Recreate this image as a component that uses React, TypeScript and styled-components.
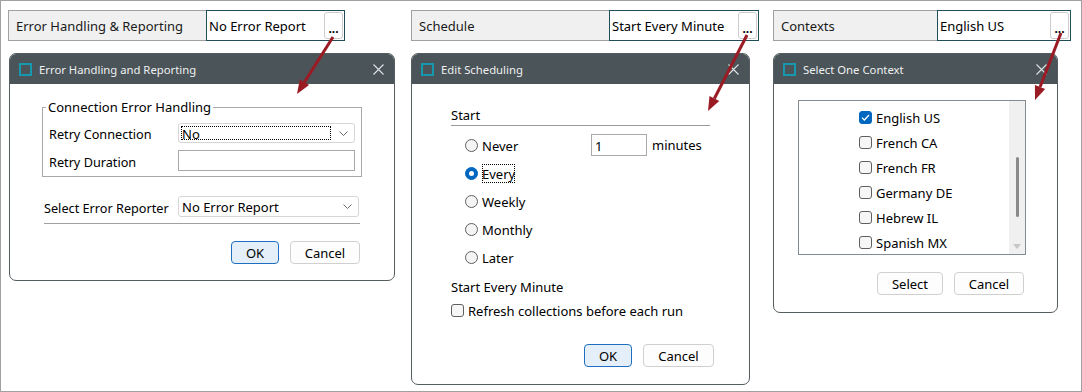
import styled, { createGlobalStyle } from "styled-components";

const GlobalStyle = createGlobalStyle`
	html, body {
		margin: 0;
		padding: 0;
		background: #ffffff;
	}
	body {
		font-family: "Noto Sans", "Open Sans", sans-serif;
		font-size: 12.7px;
		color: #000000;
	}
	* {
		box-sizing: border-box;
	}
`;

const Frame = styled.div`
	position: relative;
	display: flex;
	align-items: flex-start;
	width: 1082px;
	height: 392px;
	padding: 9px 0 0 7px;
	border: 1px solid #a0a0a0;
`;

const Column = styled.div<{ $width: number; $after: number }>`
	display: flex;
	flex-direction: column;
	gap: 12px;
	width: ${(p) => p.$width}px;
	margin-right: ${(p) => p.$after}px;
`;

const PropRow = styled.div<{ $width: number }>`
	display: flex;
	width: ${(p) => p.$width}px;
	height: 31px;
`;

const PropLabel = styled.div<{ $width: number }>`
	display: flex;
	align-items: center;
	width: ${(p) => p.$width}px;
	padding: 1px 0 0 7px;
	background: #f0f0f0;
	border: 1px solid #a0a0a0;
	border-right: none;
	color: #1a1a1a;
	font-size: 13px;
`;

const PropValue = styled.div`
	display: flex;
	flex: 1;
	padding: 1px;
	background: #ffffff;
	border: 1px solid #1f4e59;
`;

const PropText = styled.span`
	display: flex;
	align-items: center;
	flex: 1;
	padding: 1px 0 0 1px;
	font-size: 13px;
`;

const EllipsisButton = styled.div`
	display: flex;
	align-items: flex-end;
	justify-content: center;
	width: 19px;
	padding-bottom: 3px;
	background: #ffffff;
	border: 1px solid #cdcdcd;
	border-radius: 3px;
	font-size: 12px;
	font-weight: bold;
	line-height: 12px;
`;

const Dialog = styled.div<{ $width: number; $height: number; $shift: number }>`
	display: flex;
	flex-direction: column;
	width: ${(p) => p.$width}px;
	height: ${(p) => p.$height}px;
	margin-left: ${(p) => p.$shift}px;
	background: #ffffff;
	border: 1px solid #555d61;
	border-radius: 7px;
	overflow: hidden;
`;

const TitleBar = styled.div`
	display: flex;
	align-items: center;
	flex-shrink: 0;
	height: 30px;
	padding: 0 10px 0 9px;
	background: #4b5458;
	color: #eef0f1;
	font-size: 11.3px;
`;

const TitleIcon = styled.span`
	width: 13px;
	height: 13px;
	border: 2px solid #1799ad;
`;

const TitleText = styled.span`
	flex: 1;
	margin-left: 7px;
`;

const DialogBody = styled.div<{ $pad: string }>`
	display: flex;
	flex-direction: column;
	flex: 1;
	padding: ${(p) => p.$pad};
`;

const GroupBox = styled.fieldset`
	margin: 0;
	padding: 0 6px 5px 6px;
	border: 1px solid #a9a9a9;
`;

const Legend = styled.legend`
	margin-left: -3px;
	padding: 0 2px;
	line-height: 18px;
	font-size: 13px;
`;

const FormRow = styled.div<{ $height: number; $top: number; $inset?: string }>`
	display: flex;
	align-items: center;
	height: ${(p) => p.$height}px;
	margin: ${(p) => p.$top}px ${(p) => p.$inset ?? "0 0 0"};
`;

const FieldLabel = styled.span<{ $width: number }>`
	width: ${(p) => p.$width}px;
	padding-top: 2px;
`;

const ComboBox = styled.div`
	display: flex;
	align-items: center;
	flex: 1;
	align-self: stretch;
	padding: 2px 6px 2px 2px;
	background: #ffffff;
	border: 1px solid #d6d6d6;
	border-radius: 3px;
	font-size: 13px;
`;

const ComboText = styled.span<{ $focused?: boolean }>`
	display: flex;
	align-items: center;
	flex: 1;
	align-self: stretch;
	margin-right: 8px;
	padding-top: 1px;
	border: 1px dotted ${(p) => (p.$focused ? "#000000" : "transparent")};
`;

const TextBox = styled.div`
	flex: 1;
	align-self: stretch;
	background: #ffffff;
	border: 1px solid #a9a9a9;
`;

const Separator = styled.div`
	height: 1px;
	margin: 6px 2px 0 2px;
	background: #a0a0a0;
`;

const ButtonRow = styled.div<{ $top: number }>`
	display: flex;
	justify-content: flex-end;
	gap: 11px;
	margin-top: ${(p) => p.$top}px;
	padding-right: 2px;
`;

const DialogButton = styled.button<{ $width: number; $primary?: boolean }>`
	width: ${(p) => p.$width}px;
	height: 23px;
	padding: 1px 0 0 0;
	background: ${(p) => (p.$primary ? "#e4eff9" : "#fdfdfd")};
	border: 1px solid ${(p) => (p.$primary ? "#1f6fc0" : "#d0d0d0")};
	border-radius: 4px;
	font-family: inherit;
	font-size: 13px;
	color: #000000;
`;

const SectionHeading = styled.div`
	width: 259px;
	margin-top: 21px;
	padding-top: 1px;
	line-height: 19px;
	border-bottom: 1px solid #9a9a9a;
	font-size: 13px;
`;

const RadioList = styled.div`
	display: flex;
	flex-direction: column;
	margin-top: 5px;
	padding-left: 14px;
`;

const RadioRow = styled.div`
	display: flex;
	align-items: center;
	height: 28px;
`;

const Radio = styled.span<{ $checked?: boolean }>`
	display: flex;
	align-items: center;
	justify-content: center;
	width: 13px;
	height: 13px;
	border-radius: 50%;
	background: ${(p) => (p.$checked ? "#0067c0" : "#f4f4f4")};
	border: 1px solid ${(p) => (p.$checked ? "#0067c0" : "#5f5f5f")};
	&::after {
		content: "";
		width: 5px;
		height: 5px;
		border-radius: 50%;
		background: ${(p) => (p.$checked ? "#ffffff" : "transparent")};
	}
`;

const OptionLabel = styled.span<{ $width?: number; $focused?: boolean }>`
	width: ${(p) => (p.$width ? `${p.$width}px` : "auto")};
	margin-left: 4px;
	padding-top: 2px;
	line-height: 17px;
	font-size: 13px;
	${(p) => (p.$focused ? "outline: 1px dotted #000000; outline-offset: -1px;" : "")}
`;

const NumberBox = styled.div`
	display: flex;
	align-items: center;
	width: 56px;
	height: 22px;
	padding: 1px 0 0 3px;
	border: 1px solid #a9a9a9;
	font-size: 13px;
`;

const Units = styled.span`
	margin-left: 5px;
	font-size: 13px;
`;

const Caption = styled.div`
	margin-top: 5px;
	padding-top: 2px;
	line-height: 18px;
	font-size: 13px;
`;

const CheckRow = styled.div<{ $height: number; $top?: number }>`
	display: flex;
	align-items: center;
	height: ${(p) => p.$height}px;
	margin-top: ${(p) => p.$top ?? 0}px;
`;

const CheckBox = styled.span<{ $checked?: boolean }>`
	display: flex;
	align-items: center;
	justify-content: center;
	width: 13px;
	height: 13px;
	border-radius: 3px;
	background: ${(p) => (p.$checked ? "#0067c0" : "#f6f6f6")};
	border: 1px solid ${(p) => (p.$checked ? "#0067c0" : "#5f5f5f")};
`;

const ListBox = styled.div`
	display: flex;
	width: 228px;
	height: 155px;
	margin-top: 16px;
	border: 1px solid #858b92;
`;

const ListItems = styled.div`
	flex: 1;
	padding: 4px 0 0 60px;
	overflow: hidden;
`;

const ScrollTrack = styled.div`
	display: flex;
	flex-direction: column;
	align-items: center;
	width: 16px;
	background: #f0f0f0;
`;

const ScrollThumb = styled.div`
	width: 3px;
	height: 60px;
	margin-top: 56px;
	border-radius: 2px;
	background: #8a8a8a;
`;

const ScrollArrow = styled.div`
	margin-top: auto;
	margin-bottom: 5px;
	border-left: 4px solid transparent;
	border-right: 4px solid transparent;
	border-top: 5px solid #c6c6c6;
`;

const ArrowLayer = styled.svg`
	position: absolute;
	left: -1px;
	top: -1px;
	pointer-events: none;
`;

function CloseIcon() {
	return (
		<svg width="11" height="11" viewBox="0 0 11 11">
			<path d="M0.5 0.5 L10.5 10.5 M10.5 0.5 L0.5 10.5" stroke="#dfe2e3" strokeWidth="1.1" />
		</svg>
	);
}

function Chevron() {
	return (
		<svg width="9" height="5" viewBox="0 0 9 5">
			<path d="M0.5 0.5 L4.5 4.5 L8.5 0.5" fill="none" stroke="#6a6a6a" strokeWidth="1" />
		</svg>
	);
}

function Tick() {
	return (
		<svg width="9" height="7" viewBox="0 0 9 7">
			<path d="M1 3.6 L3.4 6 L8 1" fill="none" stroke="#ffffff" strokeWidth="1.3" />
		</svg>
	);
}

interface IArrow {
	x1: number;
	y1: number;
	x2: number;
	y2: number;
}

function Pointer({ x1, y1, x2, y2 }: IArrow) {
	const len = Math.hypot(x2 - x1, y2 - y1);
	const ux = (x2 - x1) / len;
	const uy = (y2 - y1) / len;
	const bx = x2 - ux * 14;
	const by = y2 - uy * 14;
	const w = 5.5;
	const head = `${x2},${y2} ${bx - uy * w},${by + ux * w} ${bx + uy * w},${by - ux * w}`;
	return (
		<g>
			<line x1={x1} y1={y1} x2={bx} y2={by} stroke="#9b1b25" strokeWidth="3" />
			<polygon points={head} fill="#9b1b25" />
		</g>
	);
}

function Header({ title }: { title: string }) {
	return (
		<TitleBar>
			<TitleIcon />
			<TitleText>{title}</TitleText>
			<CloseIcon />
		</TitleBar>
	);
}

function Property({ label, value, labelWidth, width }: { label: string; value: string; labelWidth: number; width: number }) {
	return (
		<PropRow $width={width}>
			<PropLabel $width={labelWidth}>{label}</PropLabel>
			<PropValue>
				<PropText>{value}</PropText>
				<EllipsisButton>...</EllipsisButton>
			</PropValue>
		</PropRow>
	);
}

const schedules = ["Weekly", "Monthly", "Later"];

const contexts = [
	{ name: "English US", checked: true },
	{ name: "French CA", checked: false },
	{ name: "French FR", checked: false },
	{ name: "Germany DE", checked: false },
	{ name: "Hebrew IL", checked: false },
	{ name: "Spanish MX", checked: false },
];

function App() {
	return (
		<>
			<GlobalStyle />
			<Frame>
				<Column $width={387} $after={16}>
					<Property label="Error Handling & Reporting" value="No Error Report" labelWidth={198} width={337} />
					<Dialog $width={386} $height={228} $shift={1}>
						<Header title="Error Handling and Reporting" />
						<DialogBody $pad="14px 32px 0 32px">
							<GroupBox>
								<Legend>Connection Error Handling</Legend>
								<FormRow $height={20} $top={7}>
									<FieldLabel $width={129}>Retry Connection</FieldLabel>
									<ComboBox>
										<ComboText $focused>No</ComboText>
										<Chevron />
									</ComboBox>
								</FormRow>
								<FormRow $height={21} $top={7}>
									<FieldLabel $width={129}>Retry Duration</FieldLabel>
									<TextBox />
								</FormRow>
							</GroupBox>
							<FormRow $height={21} $top={19} $inset="3px 0 2px">
								<FieldLabel $width={134}>Select Error Reporter</FieldLabel>
								<ComboBox>
									<ComboText>No Error Report</ComboText>
									<Chevron />
								</ComboBox>
							</FormRow>
							<Separator />
							<ButtonRow $top={17}>
								<DialogButton $width={48} $primary>
									OK
								</DialogButton>
								<DialogButton $width={70}>Cancel</DialogButton>
							</ButtonRow>
						</DialogBody>
					</Dialog>
				</Column>

				<Column $width={348} $after={14}>
					<Property label="Schedule" value="Start Every Minute" labelWidth={198} width={348} />
					<Dialog $width={339} $height={332} $shift={0}>
						<Header title="Edit Scheduling" />
						<DialogBody $pad="0 33px 0 39px">
							<SectionHeading>Start</SectionHeading>
							<RadioList>
								<RadioRow>
									<Radio />
									<OptionLabel $width={109}>Never</OptionLabel>
									<NumberBox>1</NumberBox>
									<Units>minutes</Units>
								</RadioRow>
								<RadioRow>
									<Radio $checked />
									<OptionLabel $focused>Every</OptionLabel>
								</RadioRow>
								{schedules.map((s) => (
									<RadioRow key={s}>
										<Radio />
										<OptionLabel>{s}</OptionLabel>
									</RadioRow>
								))}
							</RadioList>
							<Caption>Start Every Minute</Caption>
							<CheckRow $height={20} $top={4}>
								<CheckBox />
								<OptionLabel>Refresh collections before each run</OptionLabel>
							</CheckRow>
							<ButtonRow $top={24}>
								<DialogButton $width={48} $primary>
									OK
								</DialogButton>
								<DialogButton $width={71}>Cancel</DialogButton>
							</ButtonRow>
						</DialogBody>
					</Dialog>
				</Column>

				<Column $width={298} $after={0}>
					<Property label="Contexts" value="English US" labelWidth={164} width={298} />
					<Dialog $width={285} $height={260} $shift={0}>
						<Header title="Select One Context" />
						<DialogBody $pad="0 31px 0 24px">
							<ListBox>
								<ListItems>
									{contexts.map((c) => (
										<CheckRow key={c.name} $height={25}>
											<CheckBox $checked={c.checked}>{c.checked && <Tick />}</CheckBox>
											<OptionLabel>{c.name}</OptionLabel>
										</CheckRow>
									))}
								</ListItems>
								<ScrollTrack>
									<ScrollThumb />
									<ScrollArrow />
								</ScrollTrack>
							</ListBox>
							<ButtonRow $top={17}>
								<DialogButton $width={66}>Select</DialogButton>
								<DialogButton $width={70}>Cancel</DialogButton>
							</ButtonRow>
						</DialogBody>
					</Dialog>
				</Column>

				<ArrowLayer width={1082} height={392}>
					<Pointer x1={333} y1={37} x2={297} y2={94} />
					<Pointer x1={747} y1={35} x2={708} y2={111} />
					<Pointer x1={1061} y1={33} x2={1035} y2={100} />
				</ArrowLayer>
			</Frame>
		</>
	);
}

export default App;
